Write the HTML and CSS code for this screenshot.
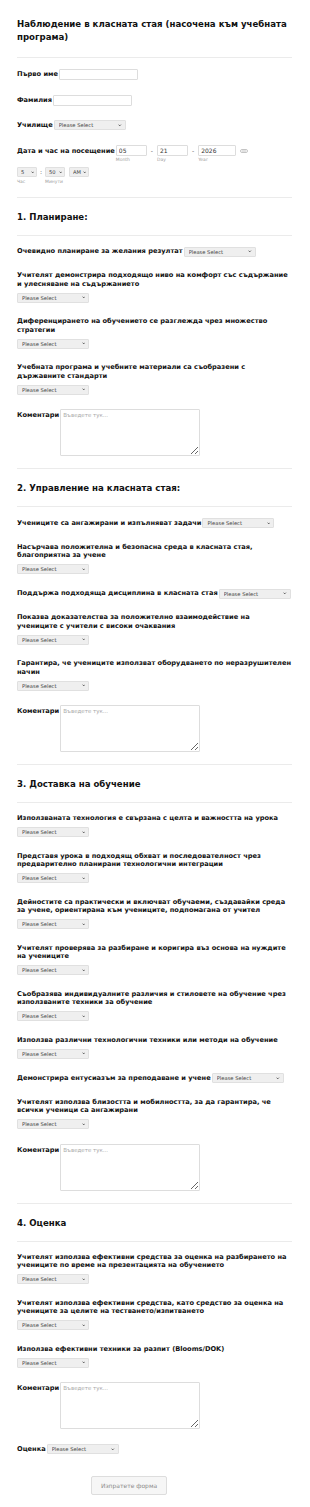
FILE: index.html
```html
<!DOCTYPE html>
<html>
<head>
  <meta charset="utf-8">
  <title>Наблюдение в класната стая</title>
  <link rel="stylesheet" href="styles.css">
</head>
<body>
  <form class="form">
    <h1 class="form-title">Наблюдение в класната стая (насочена към учебната програма)</h1>
    <div class="divider divider-top"></div>

    <div class="field inline">
      <label>Първо име</label>
      <input class="text-input name-input" type="text">
    </div>
    <div class="field inline">
      <label>Фамилия</label>
      <input class="text-input name-input" type="text">
    </div>
    <div class="field inline">
      <label>Училище</label>
      <span class="select"><select><option>Please Select</option></select><svg viewBox="0 0 6 4"><path d="M1 1 L3 3 L5 1" /></svg></span>
    </div>

    <div class="field date-field">
      <div class="inline">
        <label>Дата и час на посещение</label>
        <div class="date-part">
          <input class="text-input date-input" type="text" value="05">
          <span class="sub">Month</span>
        </div>
        <span class="dash">-</span>
        <div class="date-part">
          <input class="text-input date-input" type="text" value="21">
          <span class="sub">Day</span>
        </div>
        <span class="dash">-</span>
        <div class="date-part">
          <input class="text-input year-input" type="text" value="2026">
          <span class="sub">Year</span>
        </div>
        <svg class="calendar" viewBox="0 0 8 4"><rect x="0.5" y="0.5" width="7" height="3" rx="1.5" /><line x1="2" y1="2" x2="6" y2="2" /></svg>
      </div>
      <div class="time-row">
        <div class="date-part">
          <span class="select time-select"><select><option>5</option></select><svg viewBox="0 0 6 4"><path d="M1 1 L3 3 L5 1" /></svg></span>
          <span class="sub">Час</span>
        </div>
        <span class="colon">:</span>
        <div class="date-part">
          <span class="select time-select"><select><option>50</option></select><svg viewBox="0 0 6 4"><path d="M1 1 L3 3 L5 1" /></svg></span>
          <span class="sub">Минути</span>
        </div>
        <div class="date-part ampm">
          <span class="select time-select"><select><option>AM</option></select><svg viewBox="0 0 6 4"><path d="M1 1 L3 3 L5 1" /></svg></span>
        </div>
      </div>
    </div>

    <div class="divider"></div>
    <h2 class="section-title">1. Планиране:</h2>
    <div class="divider"></div>

    <div class="field inline">
      <label>Очевидно планиране за желания резултат</label>
      <span class="select"><select><option>Please Select</option></select><svg viewBox="0 0 6 4"><path d="M1 1 L3 3 L5 1" /></svg></span>
    </div>
    <div class="field">
      <label>Учителят демонстрира подходящо ниво на комфорт със съдържание и улесняване на съдържанието</label>
      <span class="select"><select><option>Please Select</option></select><svg viewBox="0 0 6 4"><path d="M1 1 L3 3 L5 1" /></svg></span>
    </div>
    <div class="field">
      <label>Диференцирането на обучението се разглежда чрез множество стратегии</label>
      <span class="select"><select><option>Please Select</option></select><svg viewBox="0 0 6 4"><path d="M1 1 L3 3 L5 1" /></svg></span>
    </div>
    <div class="field">
      <label>Учебната програма и учебните материали са съобразени с държавните стандарти</label>
      <span class="select"><select><option>Please Select</option></select><svg viewBox="0 0 6 4"><path d="M1 1 L3 3 L5 1" /></svg></span>
    </div>
    <div class="field inline top">
      <label>Коментари</label>
      <textarea placeholder="Въведете тук..."></textarea>
    </div>

    <div class="divider"></div>
    <h2 class="section-title">2. Управление на класната стая:</h2>
    <div class="divider"></div>

    <div class="field inline">
      <label>Учениците са ангажирани и изпълняват задачи</label>
      <span class="select"><select><option>Please Select</option></select><svg viewBox="0 0 6 4"><path d="M1 1 L3 3 L5 1" /></svg></span>
    </div>
    <div class="field">
      <label>Насърчава положителна и безопасна среда в класната стая, благоприятна за учене</label>
      <span class="select"><select><option>Please Select</option></select><svg viewBox="0 0 6 4"><path d="M1 1 L3 3 L5 1" /></svg></span>
    </div>
    <div class="field inline">
      <label>Поддържа подходяща дисциплина в класната стая</label>
      <span class="select"><select><option>Please Select</option></select><svg viewBox="0 0 6 4"><path d="M1 1 L3 3 L5 1" /></svg></span>
    </div>
    <div class="field">
      <label>Показва доказателства за положително взаимодействие на учениците с учители с високи очаквания</label>
      <span class="select"><select><option>Please Select</option></select><svg viewBox="0 0 6 4"><path d="M1 1 L3 3 L5 1" /></svg></span>
    </div>
    <div class="field">
      <label>Гарантира, че учениците използват оборудването по неразрушителен начин</label>
      <span class="select"><select><option>Please Select</option></select><svg viewBox="0 0 6 4"><path d="M1 1 L3 3 L5 1" /></svg></span>
    </div>
    <div class="field inline top">
      <label>Коментари</label>
      <textarea placeholder="Въведете тук..."></textarea>
    </div>

    <div class="divider"></div>
    <h2 class="section-title">3. Доставка на обучение</h2>
    <div class="divider"></div>

    <div class="field">
      <label>Използваната технология е свързана с целта и важността на урока</label>
      <span class="select"><select><option>Please Select</option></select><svg viewBox="0 0 6 4"><path d="M1 1 L3 3 L5 1" /></svg></span>
    </div>
    <div class="field">
      <label>Представя урока в подходящ обхват и последователност чрез предварително планирани технологични интеграции</label>
      <span class="select"><select><option>Please Select</option></select><svg viewBox="0 0 6 4"><path d="M1 1 L3 3 L5 1" /></svg></span>
    </div>
    <div class="field">
      <label>Дейностите са практически и включват обучаеми, създавайки среда за учене, ориентирана към учениците, подпомагана от учител</label>
      <span class="select"><select><option>Please Select</option></select><svg viewBox="0 0 6 4"><path d="M1 1 L3 3 L5 1" /></svg></span>
    </div>
    <div class="field">
      <label>Учителят проверява за разбиране и коригира въз основа на нуждите на учениците</label>
      <span class="select"><select><option>Please Select</option></select><svg viewBox="0 0 6 4"><path d="M1 1 L3 3 L5 1" /></svg></span>
    </div>
    <div class="field">
      <label>Съобразява индивидуалните различия и стиловете на обучение чрез използваните техники за обучение</label>
      <span class="select"><select><option>Please Select</option></select><svg viewBox="0 0 6 4"><path d="M1 1 L3 3 L5 1" /></svg></span>
    </div>
    <div class="field">
      <label>Използва различни технологични техники или методи на обучение</label>
      <span class="select"><select><option>Please Select</option></select><svg viewBox="0 0 6 4"><path d="M1 1 L3 3 L5 1" /></svg></span>
    </div>
    <div class="field inline">
      <label>Демонстрира ентусиазъм за преподаване и учене</label>
      <span class="select"><select><option>Please Select</option></select><svg viewBox="0 0 6 4"><path d="M1 1 L3 3 L5 1" /></svg></span>
    </div>
    <div class="field">
      <label>Учителят използва близостта и мобилността, за да гарантира, че всички ученици са ангажирани</label>
      <span class="select"><select><option>Please Select</option></select><svg viewBox="0 0 6 4"><path d="M1 1 L3 3 L5 1" /></svg></span>
    </div>
    <div class="field inline top">
      <label>Коментари</label>
      <textarea placeholder="Въведете тук..."></textarea>
    </div>

    <div class="divider"></div>
    <h2 class="section-title">4. Оценка</h2>
    <div class="divider"></div>

    <div class="field">
      <label>Учителят използва ефективни средства за оценка на разбирането на учениците по време на презентацията на обучението</label>
      <span class="select"><select><option>Please Select</option></select><svg viewBox="0 0 6 4"><path d="M1 1 L3 3 L5 1" /></svg></span>
    </div>
    <div class="field">
      <label>Учителят използва ефективни средства, като средство за оценка на учениците за целите на тестването/изпитването</label>
      <span class="select"><select><option>Please Select</option></select><svg viewBox="0 0 6 4"><path d="M1 1 L3 3 L5 1" /></svg></span>
    </div>
    <div class="field">
      <label>Използва ефективни техники за разпит (Blooms/DOK)</label>
      <span class="select"><select><option>Please Select</option></select><svg viewBox="0 0 6 4"><path d="M1 1 L3 3 L5 1" /></svg></span>
    </div>
    <div class="field inline top">
      <label>Коментари</label>
      <textarea placeholder="Въведете тук..."></textarea>
    </div>
    <div class="field inline rating">
      <label>Оценка</label>
      <span class="select"><select><option>Please Select</option></select><svg viewBox="0 0 6 4"><path d="M1 1 L3 3 L5 1" /></svg></span>
    </div>

    <div class="actions">
      <button type="button">Изпратете форма</button>
    </div>
  </form>
</body>
</html>
```

FILE: styles.css
```css
body {
  margin: 0;
  background-color: #ffffff;
  font-family: "DejaVu Sans", Verdana, sans-serif;
  color: #111111;
}

.form {
  width: 275px;
  padding: 18px 0 0 17px;
}

.form-title {
  margin: 0;
  font-size: 8.6px;
  line-height: 13px;
  font-weight: bold;
}

.divider {
  border-top: 1px solid #ebebeb;
  margin-top: 12px;
}

.divider-top {
  margin-top: 13px;
}

.section-title {
  margin: 14px 0 12px;
  font-size: 8.6px;
  line-height: 11px;
  font-weight: bold;
}

.section-title + .divider {
  margin-top: 0;
}

.field {
  margin-top: 14.5px;
}

.divider + .field {
  margin-top: 11px;
}

.field label {
  display: block;
  font-size: 6.65px;
  line-height: 8.5px;
  font-weight: bold;
  margin-bottom: 4.5px;
}

.inline {
  display: flex;
  align-items: center;
  gap: 1px;
}

.inline label {
  margin-bottom: 0;
  flex-shrink: 0;
  white-space: nowrap;
}

.inline.top {
  align-items: flex-start;
}

.inline.top label {
  margin-top: 2px;
}

.text-input {
  box-sizing: border-box;
  height: 11px;
  border: 1px solid #dddddd;
  border-radius: 1px;
  padding: 0 2px;
  font-family: "DejaVu Sans", Verdana, sans-serif;
  font-size: 6px;
  color: #333333;
}

.name-input {
  width: 79px;
}

.select {
  position: relative;
  display: flex;
  width: 72px;
  height: 10px;
  flex-shrink: 0;
}

.select select {
  appearance: none;
  -webkit-appearance: none;
  display: block;
  box-sizing: border-box;
  width: 100%;
  height: 10px;
  margin: 0;
  padding: 0 0 0 4px;
  border: 1px solid #e0e0e0;
  border-radius: 1px;
  background-color: #efefef;
  font-family: "DejaVu Sans", Verdana, sans-serif;
  font-size: 5.2px;
  line-height: 8px;
  color: #444444;
  outline: none;
}

.select svg {
  position: absolute;
  right: 4px;
  top: 3.5px;
  width: 3.5px;
  height: 2.5px;
  fill: none;
  stroke: #333333;
  stroke-width: 1.3;
  pointer-events: none;
}

.date-field .inline {
  align-items: flex-start;
}

.date-field .inline label {
  margin-top: 2px;
}

.date-part {
  display: flex;
  flex-direction: column;
}

.date-input {
  width: 31px;
}

.year-input {
  width: 38px;
}

.sub {
  font-size: 4.5px;
  line-height: 6px;
  color: #a0a0a0;
  margin-top: 1.5px;
}

.dash {
  font-size: 6px;
  line-height: 11px;
  color: #555555;
  margin: 0 3px;
}

.calendar {
  width: 8px;
  height: 4px;
  margin: 4px 0 0 3px;
  fill: none;
  stroke: #b5b5b5;
  stroke-width: 0.8;
}

.time-row {
  display: flex;
  align-items: flex-start;
  margin-top: 4px;
}

.select.time-select {
  width: 20px;
}

.time-select select {
  padding-left: 3px;
}

.time-select svg {
  right: 3px;
}

.colon {
  font-size: 6px;
  line-height: 10px;
  color: #555555;
  margin: 0 3px;
}

.ampm {
  margin-left: 4px;
}

textarea {
  box-sizing: border-box;
  width: 140px;
  height: 47px;
  border: 1px solid #dddddd;
  border-radius: 1px;
  padding: 2px 2px;
  font-family: "DejaVu Sans", Verdana, sans-serif;
  font-size: 5.5px;
  resize: vertical;
}

textarea::placeholder {
  color: #a8a8a8;
}

.rating {
  margin-top: 15px;
}

.actions {
  margin: 19px 0 0 74px;
  padding-bottom: 15px;
}

button {
  width: 76px;
  height: 19px;
  border: 1px solid #dddddd;
  border-radius: 2px;
  background-color: #f6f6f6;
  color: #8a8a8a;
  font-family: "DejaVu Sans", Verdana, sans-serif;
  font-size: 6px;
  cursor: pointer;
}
```
